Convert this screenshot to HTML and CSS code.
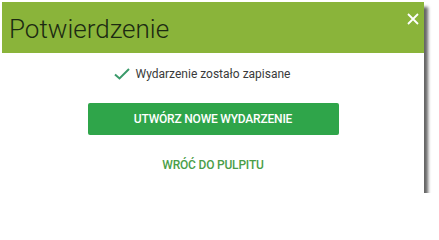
FILE: index.html
```html
<!DOCTYPE html>
<html lang="pl">
<head>
<meta charset="utf-8">
<title>Potwierdzenie</title>
<link rel="stylesheet" href="styles.css">
</head>
<body>
<div class="dialog">
  <div class="dialog-header">
    <h1 class="dialog-title">Potwierdzenie</h1>
    <button class="close-btn" aria-label="Zamknij">
      <svg width="12" height="12" viewBox="0 0 12 12"><path d="M1 1 L11 11 M11 1 L1 11" stroke="#fff" stroke-width="1.8" fill="none"/></svg>
    </button>
  </div>
  <div class="dialog-body">
    <div class="status">
      <svg class="status-icon" width="16" height="12" viewBox="0 0 16 12"><path d="M1 6.5 L5.5 10.5 L15 1" stroke="#3a9a6a" stroke-width="2" fill="none"/></svg>
      <span class="status-text">Wydarzenie zostało zapisane</span>
    </div>
    <button class="primary-btn">UTWÓRZ NOWE WYDARZENIE</button>
    <a class="back-link" href="#">WRÓĆ DO PULPITU</a>
  </div>
</div>
</body>
</html>
```
FILE: styles.css
```css
html, body {
  margin: 0;
  padding: 0;
  background: #ffffff;
}
body {
  padding: 2px 0 0 2px;
  font-family: Roboto, "Liberation Sans", sans-serif;
}
.dialog {
  width: 422px;
  height: 191px;
  background: #ffffff;
  box-shadow: 4px 5px 3px rgba(0, 0, 0, 0.6);
  display: flex;
  flex-direction: column;
}
.dialog-header {
  height: 51px;
  background: #8ab43a;
  display: flex;
  align-items: center;
  justify-content: space-between;
  padding: 0 5px 0 7px;
}
.dialog-title {
  margin: 0;
  font-family: Roboto, sans-serif;
  font-weight: 300;
  font-size: 26px;
  color: #1c2a12;
  margin-top: 3px;
}
.close-btn {
  background: none;
  border: 0;
  padding: 0;
  width: 12px;
  height: 12px;
  display: flex;
  align-self: flex-start;
  margin-top: 11px;
}
.dialog-body {
  display: flex;
  flex-direction: column;
  align-items: center;
  padding-top: 14px;
}
.status {
  display: flex;
  align-items: center;
  gap: 6px;
  height: 14px;
}
.status-icon {
  margin-left: -22px;
}
.status-text {
  font-size: 12px;
  color: #3a3a3a;
}
.primary-btn {
  margin-top: 22px;
  width: 251px;
  height: 32px;
  background: #2fa54a;
  color: #ffffff;
  border: 0;
  border-radius: 2px;
  font-family: Roboto, sans-serif;
  font-weight: 500;
  font-size: 12px;
  letter-spacing: -0.2px;
}
.back-link {
  margin-top: 23px;
  font-size: 12px;
  font-weight: 500;
  color: #4a9e48;
  text-decoration: none;
  letter-spacing: -0.2px;
}
```
